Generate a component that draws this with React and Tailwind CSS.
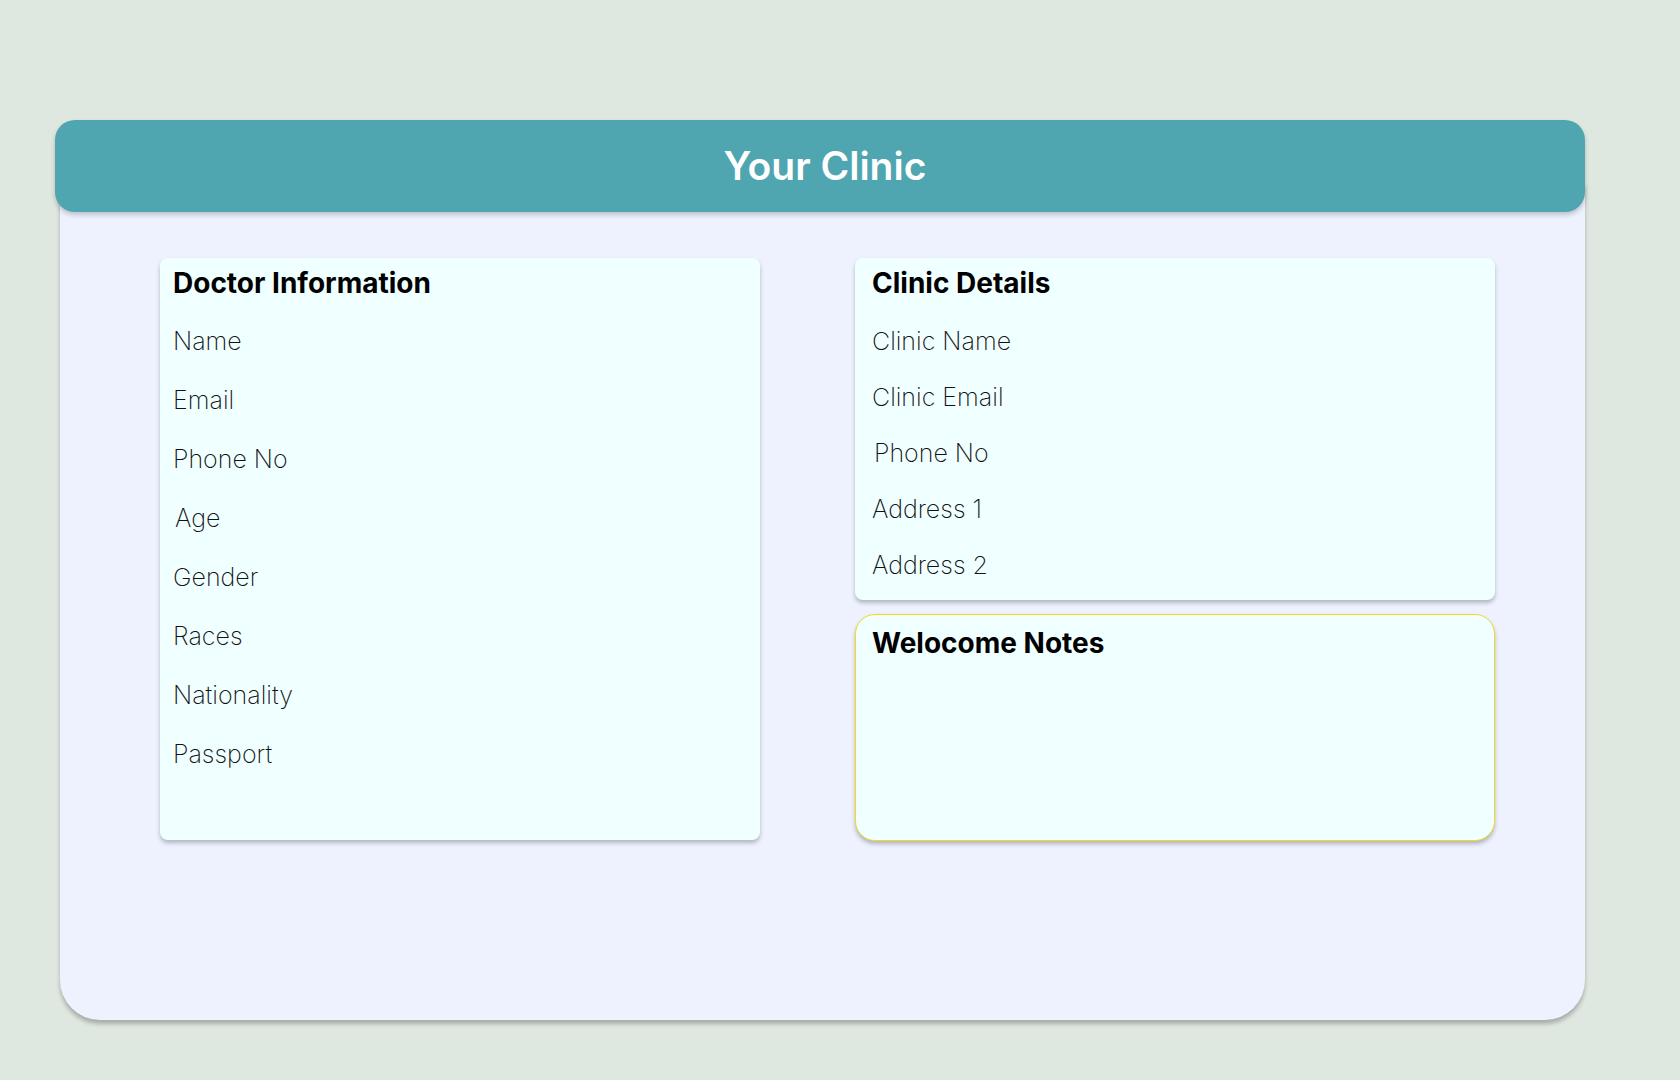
import React from 'react';

const doctorFields = ['Name', 'Email', 'Phone No', 'Age', 'Gender', 'Races', 'Nationality', 'Passport'];
const clinicFields = ['Clinic Name', 'Clinic Email', 'Phone No', 'Address 1', 'Address 2'];

const FieldLabel = ({ children, offset }) => (
    <p className={`text-[25px] leading-none font-extralight text-[#111] ${offset ? 'ml-[2px]' : ''}`}>{children}</p>
);

const App = () => {
    return (
        <div className="min-h-screen bg-[#dfe8e0] pt-[120px] pl-[55px]" style={{ fontFamily: 'Inter, "Noto Sans", sans-serif' }}>
            <div className="w-[1530px]">
                <header className="relative z-10 h-[92px] pl-[10px] rounded-[20px] bg-[#4fa5b0] shadow-[0_3px_5px_rgba(0,0,0,0.2)] flex items-center justify-center">
                    <h1 className="text-[39px] font-semibold text-white">Your Clinic</h1>
                </header>

                <main className="ml-[5px] -mt-[30px] pt-[76px] pl-[100px] h-[838px] rounded-b-[40px] bg-[#eef2ff] shadow-[0_4px_4px_rgba(0,0,0,0.25)]">
                    <div className="flex gap-[95px] items-start">
                        <section className="w-[600px] h-[582px] rounded-lg bg-[#f0ffff] shadow-[0_3px_4px_rgba(0,0,0,0.25)] px-[13px] pt-[11px]">
                            <h2 className="text-[28px] leading-none font-bold text-black">Doctor Information</h2>
                            <div className="mt-[32px] flex flex-col gap-[34px]">
                                {doctorFields.map((f) => (
                                    <FieldLabel key={f} offset={f === 'Age'}>{f}</FieldLabel>
                                ))}
                            </div>
                        </section>

                        <div className="w-[640px] flex flex-col gap-[14px]">
                            <section className="h-[342px] rounded-lg bg-[#f0ffff] shadow-[0_3px_4px_rgba(0,0,0,0.25)] px-[17px] pt-[11px]">
                                <h2 className="text-[28px] leading-none font-bold text-black">Clinic Details</h2>
                                <div className="mt-[32px] flex flex-col gap-[31px]">
                                    {clinicFields.map((f, i) => (
                                        <FieldLabel key={f + i} offset={i === 2}>{f}</FieldLabel>
                                    ))}
                                </div>
                            </section>

                            <section className="h-[227px] rounded-[20px] border border-[#f5dc1a] bg-[#f0ffff] shadow-[0_3px_4px_rgba(0,0,0,0.25)] px-[16px] pt-[14px]">
                                <h2 className="text-[28px] leading-none font-bold text-black">Welocome Notes</h2>
                            </section>
                        </div>
                    </div>
                </main>
            </div>
        </div>
    );
};

export default App;
